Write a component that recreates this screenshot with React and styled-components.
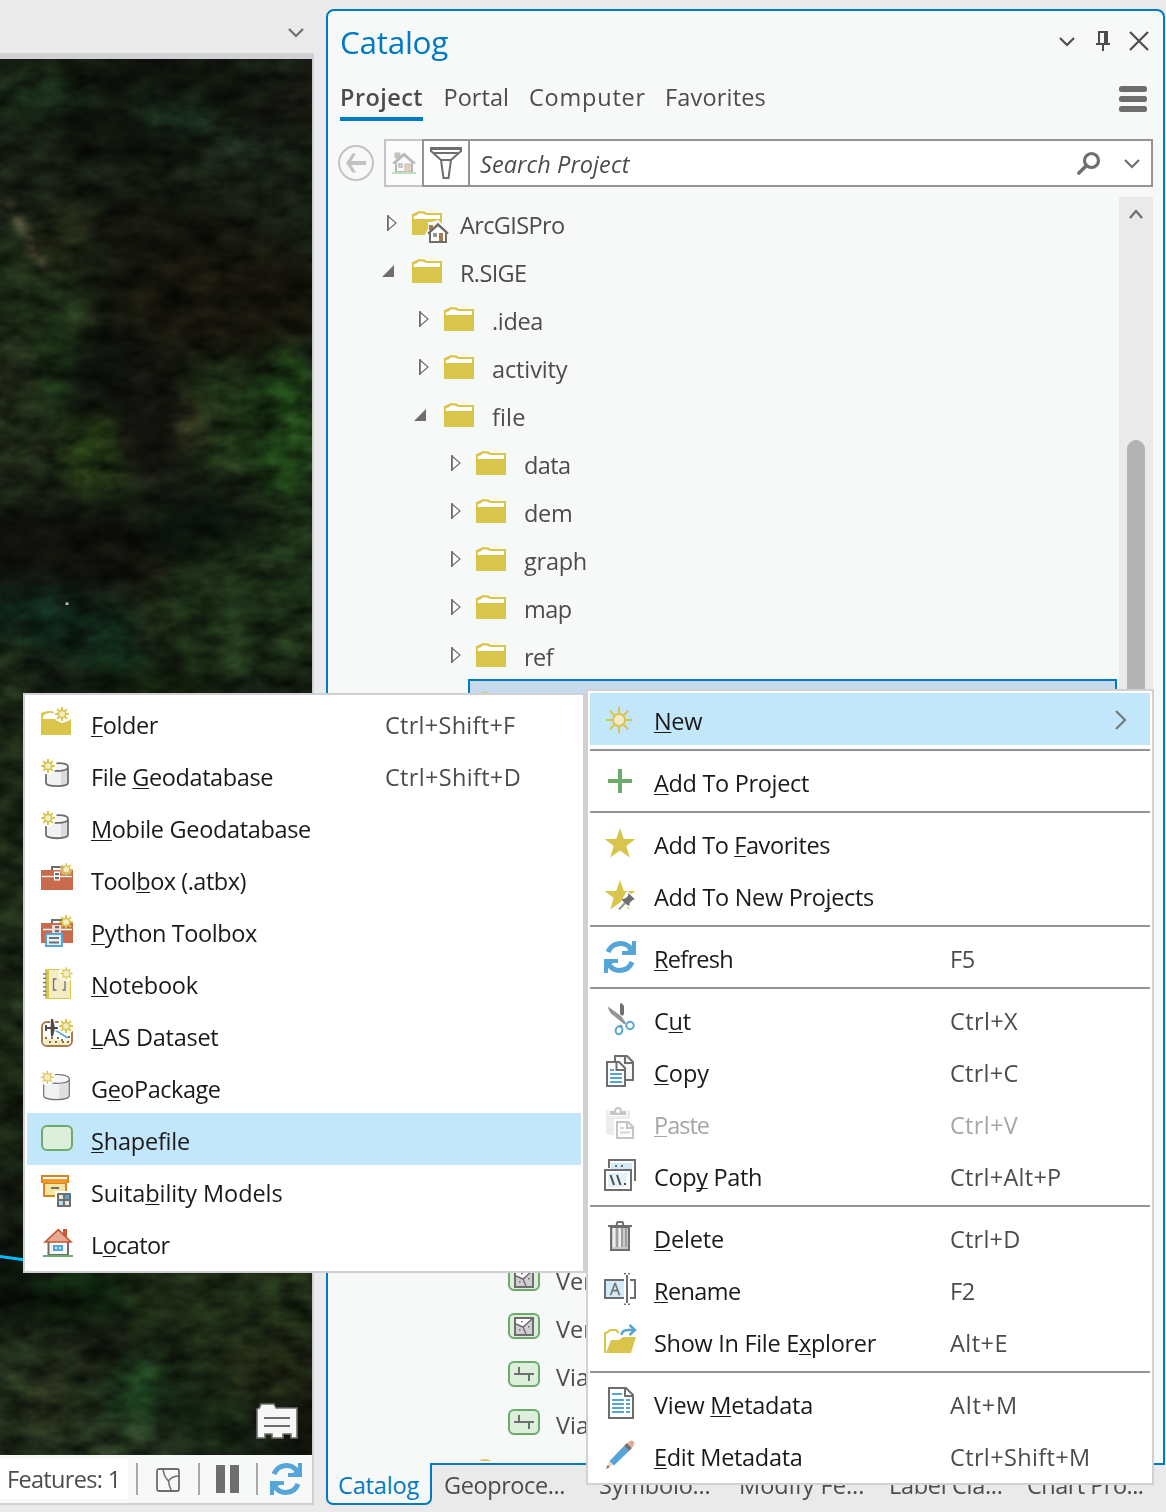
import React, { useLayoutEffect, useRef } from "react";
import styled, { createGlobalStyle } from "styled-components";

const C = {
  blue: "#007ac2",
  ink: "#4c4c4c",
  dark: "#1a1a1a",
  grey: "#6e6e6e",
  line: "#949494",
  frame: "#d0d0d5",
  chrome: "#eaeaea",
  pane: "#f7f9f9",
  gold: "#d9c54b",
  cream: "#f3edc5",
  sky: "#56a5d8",
  green: "#6bab6c",
  mint: "#ddeedb",
  red: "#c86a4b",
};

const Global = createGlobalStyle`
  * { box-sizing: border-box; }
  body { margin: 0; background: ${C.chrome}; font-family: "Open Sans", "Noto Sans", sans-serif; color: ${C.ink}; }
  svg { display: block; overflow: visible; flex: none; }
`;

/* ---------- text ---------- */
const TextSpan = styled.span`
  display: inline-block;
  white-space: pre;
  font-size: ${(p) => p.$size || 23.5}px;
  font-weight: ${(p) => p.$weight || 400};
  font-style: ${(p) => (p.$italic ? "italic" : "normal")};
  color: ${(p) => p.$color || "inherit"};
`;
const Mnemonic = styled.span`
  text-decoration: underline;
  text-decoration-thickness: 1px;
  text-underline-offset: 2px;
  text-decoration-skip-ink: none;
`;

/* Tracks the label so that its run is `width` pixels long; "&" marks the access key. */
function Label({ children, width, size, weight, italic, color }) {
  const ref = useRef(null);
  const at = children.indexOf("&");
  const plain = children.replace("&", "");
  useLayoutEffect(() => {
    const el = ref.current;
    if (!width) return;
    el.style.letterSpacing = "0px";
    const natural = el.getBoundingClientRect().width;
    el.style.letterSpacing = (width - natural) / plain.length + "px";
  }, [width, plain]);
  return (
    <TextSpan ref={ref} $size={size} $weight={weight} $italic={italic} $color={color}>
      {at < 0 ? plain : (
        <>
          {plain.slice(0, at)}
          <Mnemonic>{plain[at]}</Mnemonic>
          {plain.slice(at + 1)}
        </>
      )}
    </TextSpan>
  );
}

/* ---------- icons ---------- */
const Svg = ({ w = 32, h = 32, children }) => (
  <svg width={w} height={h} viewBox={`0 0 ${w} ${h}`} fill="none">{children}</svg>
);

const Sun = ({ x, y, r = 7, core = 3.7, sw = 1.6, halo }) => (
  <g>
    {halo && <circle cx={x} cy={y} r={r + 1.5} fill={halo} />}
    {[0, 45, 90, 135, 180, 225, 270, 315].map((a) => (
      <path key={a} d={`M${x} ${y - core}V${y - r}`} stroke={C.gold} strokeWidth={sw} transform={`rotate(${a} ${x} ${y})`} />
    ))}
    <circle cx={x} cy={y} r={core} fill={C.cream} stroke={C.gold} strokeWidth={sw * 0.9} />
  </g>
);

const FolderShape = () => (
  <>
    <path d="M0 3L3 2Q5 0 9 0Q13 0 15 2H30V24H0Z" fill={C.gold} />
    <path d="M2 5Q5 4.6 6 2.9Q9 1.8 12 3L14 4H28V8H2Z" fill="#fff" />
  </>
);
const FolderIcon = () => <Svg w={30} h={24}><FolderShape /></Svg>;
const HomeFolderIcon = () => (
  <Svg w={30} h={24}>
    <FolderShape />
    <path d="M13 23L16 18V11H20L26 9L37 20V34H15Z" fill={C.pane} />
    <path d="M17 14H21V19H17Z" fill="#ae7a48" />
    <path d="M18 21L26 14L34 21V31H18Z" fill="#fff" stroke={C.grey} strokeWidth="2" />
    <path d="M16 22.5L26 13.2L36 22.5" stroke={C.grey} strokeWidth="2" />
    <path d="M21 22H25V26H21Z" fill="#949494" />
    <path d="M27 22H31V30H27Z" fill="#ae7a48" />
  </Svg>
);
const PolygonLayerIcon = () => (
  <Svg w={32} h={26}>
    <rect x="1" y="1" width="30" height="24" rx="5" fill={C.mint} stroke={C.green} strokeWidth="2" />
    <rect x="7" y="5" width="18" height="17" fill="#cfcfcf" stroke={C.grey} strokeWidth="2" />
    <path d="M8 6H24L15 14L8 11Z" fill="#fff" />
    <path d="M8 11L15 14L24 6M15 14L18 21" stroke={C.grey} strokeWidth="1.5" />
    <path d="M13 8h1.6v1.6H13zM11 16h1.6v1.6H11zM20 13h1.6v1.6H20z" fill={C.grey} />
  </Svg>
);
const LineLayerIcon = () => (
  <Svg w={32} h={26}>
    <rect x="1" y="1" width="30" height="24" rx="5" fill={C.mint} stroke={C.green} strokeWidth="2" />
    <path d="M6 13H26M11 6V13M21 13V20" stroke={C.grey} strokeWidth="2" />
  </Svg>
);

const NewFolderIcon = () => (
  <Svg>
    <path d="M0 6L3 5Q5 4 9 4Q12 4 13 5H30V28H0Z" fill={C.gold} />
    <path d="M2 9Q6 5 11 6L13 7L17 12H2Z" fill="#fff" />
    <path d="M13 3H31V11L27 14L21 16L15 13Z" fill="#fff" />
    <Sun x={21} y={7} halo="#fff" sw={1.9} />
  </Svg>
);
const GeodatabaseIcon = () => (
  <Svg>
    <path d="M5 8V24C5 28.5 27 28.5 27 24V8" fill="#f2f2f2" />
    <path d="M20 11.5L27 8V24Q26 26.5 20 27Z" fill="#dcdcdc" />
    <ellipse cx="16" cy="8" rx="11" ry="3.7" fill="#f7f7f7" />
    <path d="M5 15V24C5 28.3 27 28.3 27 24V8C27 3.5 16 4 15.5 4.6M27 8C27 12 16 12.5 12 11.4" stroke={C.grey} strokeWidth="1.8" />
    <Sun x={7} y={7} halo="#fff" sw={1.9} />
  </Svg>
);
const GeoPackageIcon = () => (
  <Svg>
    <path d="M2.7 8V24.5C2.7 30 28.3 30 28.3 24.5V8" fill="#f2f2f2" />
    <path d="M18 12L28 9V24.5Q26 28 18 28.6Z" fill="#dfdfdf" />
    <ellipse cx="15.5" cy="8" rx="12.8" ry="4.2" fill="#f7f7f7" />
    <path d="M2.7 13V24.5C2.7 30 28.3 30 28.3 24.5V8C28.3 3 14 3 12 4.3M28.3 8C28.3 12.5 15 13 9 11.6" stroke={C.grey} strokeWidth="1.2" />
    <Sun x={6.3} y={6.3} r={6.5} halo="#fff" sw={1.3} />
  </Svg>
);
const ToolboxIcon = () => (
  <Svg>
    <path d="M11 7V4H21V7" stroke={C.grey} strokeWidth="2" />
    <path d="M0 7H32V27H0Z" fill={C.red} />
    <path d="M1 13.5H31" stroke="#fff" strokeWidth="1.3" />
    <rect x="13" y="8.5" width="6" height="9" fill="#fff" />
    <path d="M14 10h4v2.3h-4zM14 14h4v2.3h-4z" fill={C.grey} />
    <path d="M19 2H31V9L28 12H22L19 9Z" fill="#fff" opacity=".35" />
    <Sun x={25.3} y={6.5} r={6.3} sw={1.4} core={3.4} />
  </Svg>
);
const PythonToolboxIcon = () => (
  <Svg>
    <path d="M11 8V5H21V8" stroke={C.grey} strokeWidth="2" />
    <path d="M0 8H32V28H0Z" fill={C.red} />
    <path d="M2 14.5H31" stroke="#fff" strokeWidth="1.5" />
    <path d="M11 10H20V18H11Z" fill="#f3dcd5" />
    <path d="M14 11h4v2.3h-4zM14 15h4v2.3h-4z" fill={C.grey} />
    <Sun x={25} y={7} sw={1.9} />
    <rect x="5" y="19" width="16" height="12" fill="#e4f1f9" stroke={C.sky} strokeWidth="2" />
    <path d="M8 23H18M8 27.5H18" stroke={C.grey} strokeWidth="2" />
  </Svg>
);
const NotebookIcon = () => (
  <Svg>
    <path d="M4.5 2.5H29.5V31.5H4.5Z" fill={C.cream} stroke={C.gold} />
    <path d="M4.5 2H8V32H4.5Z" fill={C.gold} />
    {[7, 11.3, 15.6, 19.9, 24.2, 28].map((y) => <path key={y} d={`M2 ${y}H5.4`} stroke={C.grey} strokeWidth="1.3" />)}
    <path d="M15.5 12H12.5V23H15.5M21.5 12H24V23H21.5" stroke={C.grey} strokeWidth="1.3" />
    <Sun x={25.3} y={6.5} r={6.3} halo="#fff" sw={1.3} />
  </Svg>
);
const LasIcon = () => (
  <Svg>
    <rect x="1" y="3" width="30" height="24" rx="5" fill="#fff" stroke="#ae7a48" strokeWidth="2" />
    <path d="M3 19Q11 20 18 21T29 21V23L26 26H6L3 23Z" fill={C.cream} />
    {[[4, 18], [10, 18], [16, 18], [20, 20], [8, 22], [14, 22], [21, 22], [26, 22], [27, 17]].map(([x, y]) => (
      <rect key={x + "-" + y} x={x} y={y} width="2" height="2" fill="#8f6a48" />
    ))}
    <path d="M14 11L27 19" stroke={C.sky} strokeWidth="1.6" />
    <path d="M3 9H18M5 6V12M11.5 0V17" stroke="#fff" strokeWidth="5" />
    <path d="M4 9H18M5 6V12" stroke={C.ink} strokeWidth="2" />
    <path d="M10 0H12L14 9L12 17.5H10L9.5 9Z" fill={C.ink} />
    <Sun x={25} y={7} halo="#fff" sw={1.9} />
  </Svg>
);
const ShapefileIcon = () => (
  <Svg><rect x="1" y="3" width="30" height="24" rx="5" fill={C.mint} stroke={C.green} strokeWidth="2" /></Svg>
);
const SuitabilityIcon = () => (
  <Svg>
    <path d="M3 8H25V21H3Z" fill="#f3e6a2" stroke="#d98322" strokeWidth="2" />
    <path d="M1 1H27V7H1Z" fill="#fff" stroke="#d98322" strokeWidth="2" />
    <path d="M2 4H26V8H2Z" fill="#f7982b" />
    <path d="M10 13H18" stroke={C.grey} strokeWidth="2" />
    <path d="M14 16H32V34H14Z" fill="#fff" />
    <rect x="17" y="19" width="12" height="12" fill={C.mint} stroke={C.grey} strokeWidth="2" />
    <path d="M23 19H29V25H23Z" fill={C.sky} />
    <path d="M17 25H23V31H17Z" fill="#b9dcf2" />
    <path d="M17 19H29V31H17ZM23 19V31M17 25H29" stroke={C.grey} strokeWidth="2" />
  </Svg>
);
const LocatorIcon = () => (
  <Svg>
    <path d="M7.5 14H27V28H7.5Z" fill="#f7f7f7" stroke={C.grey} strokeWidth="2" />
    <path d="M22 2H26V10H22Z" fill="#c95730" />
    <path d="M4 15L17.3 2.7L30 15Z" fill="#e6a994" stroke="#c95730" strokeWidth="1.6" />
    <path d="M2 29H32" stroke={C.green} strokeWidth="2" />
    <rect x="12" y="18" width="10" height="6" fill={C.sky} />
    <path d="M14 20h2v2h-2zM18 20h2v2h-2z" fill="#cfe8f7" />
  </Svg>
);

const NewIcon = () => <Svg><Sun x={15} y={17} r={13} core={6} sw={2} /></Svg>;
const PlusIcon = () => <Svg><path d="M16 4V28M4 16H28" stroke={C.green} strokeWidth="4" /></Svg>;
const STAR = "M16 1L19.8 12H31.6L22.3 19L25.7 30.5L16 23.5L6.3 30.5L9.7 19L0.4 12H12.2Z";
const StarIcon = () => <Svg><path d={STAR} fill={C.gold} /></Svg>;
const StarPinIcon = () => (
  <Svg>
    <path d={STAR} fill={C.gold} />
    <path d="M23 12L33 19L26 27L22 29L13 33L17 22Z" fill="#fff" />
    <path d="M24.5 14L31 20.5L28.5 21L25.5 24L25.5 27L21.5 25L17.5 20.5L18.5 20L21 19.5L24 17Z" fill={C.grey} />
    <path d="M21 24L15 30.5" stroke={C.line} strokeWidth="2" />
  </Svg>
);
const RefreshIcon = () => (
  <Svg>
    <path d="M4 11A13.2 13.2 0 0 1 27 8" stroke={C.sky} strokeWidth="5" />
    <path d="M32 0V14H18V10H23L28 5V0Z" fill={C.sky} />
    <path d="M28 21A13.2 13.2 0 0 1 5 24" stroke={C.sky} strokeWidth="5" />
    <path d="M0 32V18H14V22H9L4 27V32Z" fill={C.sky} />
  </Svg>
);
const CutIcon = () => (
  <Svg>
    <path d="M16 1L17.5 0L20 3V11L18.5 13L16 11Z" fill={C.grey} />
    <path d="M4 3.5L17 13L22 20L20.5 21.5L7 10.5Q4 7 4 3.5Z" fill="#949494" />
    <path d="M16.5 22L18 24" stroke={C.grey} strokeWidth="1.5" />
    <circle cx="26" cy="22.5" r="3.7" stroke={C.sky} strokeWidth="2" />
    <ellipse cx="15" cy="27.3" rx="3.3" ry="4" stroke={C.sky} strokeWidth="2" transform="rotate(15 15 27.3)" />
  </Svg>
);
const CopyIcon = () => (
  <Svg>
    <path d="M11 1H23L29 7V25H11Z" fill="#f7f7f7" stroke={C.grey} strokeWidth="2" />
    <path d="M21 1V8H29" stroke={C.grey} strokeWidth="2" />
    <path d="M3 7H15L21 13V31H3Z" fill="#fff" stroke={C.grey} strokeWidth="2" />
    <path d="M12.5 7V15H21" stroke={C.grey} strokeWidth="2" />
    <path d="M6 15H10M6 19H18M6 23H18M6 27H18" stroke={C.sky} strokeWidth="2" />
  </Svg>
);
const PasteIcon = () => (
  <Svg>
    <rect x="2" y="3" width="24" height="25" rx="2" fill="#ededed" />
    <path d="M5 3H23V9H5Z" fill="#fff" />
    <path d="M6 4H22V8H6Z" fill="#c5c5c5" />
    <circle cx="14" cy="4" r="3" fill="#fff" stroke="#c5c5c5" strokeWidth="1.8" />
    <path d="M10 12H32V34H10Z" fill="#fff" />
    <path d="M13 15H24L29 20V31H13Z" fill="#fdfdfd" stroke="#c5c5c5" strokeWidth="2" />
    <path d="M23 15V21H29" stroke="#c5c5c5" strokeWidth="2" />
    <path d="M16 21H20M16 25.5H26" stroke="#d6d6d6" strokeWidth="2" />
  </Svg>
);
const CopyPathIcon = () => (
  <Svg>
    <path d="M5 9V1H31V22" stroke={C.grey} strokeWidth="2" />
    <path d="M7 4H28V10H7Z" fill="#d3eaf8" />
    <path d="M11 6h2v2h-2zM17 6h2v2h-2z" fill={C.grey} />
    <path d="M1 11H27V31H1Z" fill="#fff" stroke={C.grey} strokeWidth="2" />
    <path d="M4 28V14H24L20 28Z" fill="#e4f2fa" />
    <path d="M6.5 16L10 26M13 16L16.5 26" stroke={C.ink} strokeWidth="2" />
    <path d="M20 24h2v2h-2z" fill={C.ink} />
  </Svg>
);
const DeleteIcon = () => (
  <Svg>
    <path d="M12.8 4V2.5Q13 1 14.5 1H17.5Q19 1 19.2 2.5V4" stroke={C.grey} strokeWidth="2" />
    <path d="M7 6H25V29H7Z" fill="#c9c9c9" stroke={C.grey} strokeWidth="2" />
    <path d="M10 7V26M16 7V26" stroke="#eee" strokeWidth="2.2" />
    <path d="M13 7V26M18 7V26M22 7V26" stroke="#949494" strokeWidth="1.6" />
    <path d="M4 5H28" stroke={C.grey} strokeWidth="2" />
  </Svg>
);
const RenameIcon = () => (
  <Svg>
    <path d="M20 7H1V25H20" fill="#d3eaf8" stroke={C.grey} strokeWidth="2" />
    <text x="11" y="22" textAnchor="middle" fontSize="16" fill={C.grey} stroke={C.grey} strokeWidth=".3" fontFamily="Open Sans">A</text>
    <path d="M26 7H31V25H26" stroke={C.grey} strokeWidth="2" />
    <path d="M23 2V30" stroke={C.grey} strokeWidth="2" />
    <path d="M20 0h2v1.6h-2zM24 0h2v1.6h-2zM20 30.4h2v1.6h-2zM24 30.4h2v1.6h-2z" fill={C.grey} />
  </Svg>
);
const ExplorerIcon = () => (
  <Svg>
    <path d="M1 27V8Q5 7 6 5H12L15 8" stroke={C.gold} strokeWidth="2" />
    <path d="M2 28L7 15H15L19 12H32L27 28H0V24Z" fill={C.gold} />
    <path d="M17.5 10Q18 5 24 5H30" stroke={C.sky} strokeWidth="2.4" />
    <path d="M25.5 0L31 5L25.5 10" stroke={C.sky} strokeWidth="2.4" />
  </Svg>
);
const ViewMetadataIcon = () => (
  <Svg>
    <path d="M5 1H22L29 8V31H5Z" fill="#fff" stroke={C.grey} strokeWidth="2" />
    <path d="M21 1V9H29" stroke={C.grey} strokeWidth="2" />
    <path d="M8 7H18M8 13H20M8 17H20M8 21H20M8 25H20M22 13H26M22 17H26M22 21H26M22 25H26" stroke={C.sky} strokeWidth="1.8" />
  </Svg>
);
const EditMetadataIcon = () => (
  <Svg>
    <path d="M5.5 22L9.5 26L4.5 28.5L3.2 27.2Z" fill="#f3dcc0" />
    <path d="M3.7 26L5.8 28L2 30Z" fill={C.grey} />
    <path d="M5.5 22L20 7L25 12L10 26.5Z" fill={C.sky} />
    <path d="M20 7L23 4L28 9L25 12Z" fill={C.grey} />
    <path d="M23.5 4L26 2Q28 1 29.5 2.5T30 6L28 9Z" fill="#e6a994" />
  </Svg>
);

const Chevron = ({ w = 16, h = 9, dir = "down", color = C.ink, sw = 2.2 }) => {
  const d = {
    down: `M1 1L${w / 2} ${h - 1}L${w - 1} 1`,
    up: `M1 ${h - 1}L${w / 2} 1L${w - 1} ${h - 1}`,
    right: `M1 1L${w - 1} ${h / 2}L1 ${h - 1}`,
  }[dir];
  return <Svg w={w} h={h}><path d={d} stroke={color} strokeWidth={sw} /></Svg>;
};
const PinIcon = () => (
  <Svg w={14} h={20}>
    <path d="M3 13V1H11V13" stroke={C.ink} strokeWidth="2" />
    <path d="M8 1H12V13H8Z" fill={C.ink} />
    <path d="M0 13H14M7 14V20" stroke={C.ink} strokeWidth="2" />
  </Svg>
);
const CloseIcon = () => <Svg w={20} h={20}><path d="M1 1L19 19M19 1L1 19" stroke={C.ink} strokeWidth="2.2" /></Svg>;
const BackIcon = () => (
  <Svg w={36} h={36}>
    <circle cx="18" cy="18" r="17" stroke="#c2c2c2" strokeWidth="2" />
    <path d="M28 18H11" stroke="#c2c2c2" strokeWidth="4" />
    <path d="M18 8.5H14.5L8 18L14.5 27.5H18L12 18Z" fill="#c2c2c2" />
  </Svg>
);
const HomeIcon = () => (
  <Svg w={24} h={22}>
    <path d="M3 1H8V6H3Z" fill="#cfc4b8" stroke="#bbb" />
    <path d="M4 10V20H20V10L12 3Z" fill="#fbfbfb" stroke="#b9b9b9" strokeWidth="2" />
    <path d="M1 11.5L12 2L23 11.5" stroke="#b9b9b9" strokeWidth="2.2" />
    <path d="M7 12h3v3H7z" stroke="#b9b9b9" strokeWidth="1.5" />
    <path d="M13 12H18V20H13Z" fill="#e3d3c2" stroke="#c5b9ac" />
    <path d="M0 21H24" stroke="#bfe0bf" strokeWidth="2" />
  </Svg>
);
const FilterIcon = () => (
  <Svg w={32} h={32}>
    <path d="M1 1H31V4L21 13L18.5 31H13.5L11 13L1 4Z" fill="#fff" stroke={C.grey} strokeWidth="2" />
    <path d="M1 2H31M4 6H28M11 13H21" stroke={C.grey} strokeWidth="2" />
  </Svg>
);
const SearchIcon = () => (
  <Svg w={24} h={24}>
    <circle cx="15.5" cy="8.5" r="7" stroke={C.grey} strokeWidth="3.2" />
    <path d="M10.5 13.5L2.9 21.1" stroke={C.grey} strokeWidth="3.6" strokeLinecap="round" />
  </Svg>
);
const ClosedArrow = () => (
  <Svg w={10} h={16}><path d="M1 1V15L9 8Z" fill="#fff" stroke={C.grey} strokeWidth="1.2" /><path d="M.8 0V16" stroke={C.grey} strokeWidth="1.6" /></Svg>
);
const OpenArrow = () => <Svg w={12} h={12}><path d="M12 0V12H0Z" fill={C.grey} /></Svg>;
const MapStatusIcon = () => (
  <Svg w={24} h={24}>
    <rect x="1" y="2" width="22" height="22" rx="2" stroke={C.grey} strokeWidth="1.8" />
    <path d="M7 2Q8 10 12.5 14Q16 9 23 9M12.5 14Q13 19 15.5 24" stroke={C.grey} strokeWidth="1.6" />
  </Svg>
);
const TrayIcon = () => (
  <Svg w={42} h={36}>
    <path d="M1 6L3.5 5L5 1H18L20 5H41V35H35V31H27V35H16V31H9V35H1Z" fill="#f7f7f7" stroke={C.grey} strokeWidth="1.6" />
    <path d="M8 15H34M8 23H34" stroke={C.grey} strokeWidth="2" />
  </Svg>
);

/* ---------- shell ---------- */
const Shell = styled.div`
  position: relative;
  display: flex;
  gap: 12px;
  width: 1166px;
  height: 1512px;
  overflow: hidden;
  background: ${C.chrome};
`;
const MapColumn = styled.section`
  width: 314px;
  flex: none;
  display: flex;
  flex-direction: column;
`;
const MapTabs = styled.div`
  height: 53px;
  padding: 12px 10px 0 0;
  display: flex;
  justify-content: flex-end;
  align-items: center;
`;
const MapFrame = styled.div`
  height: 1452px;
  border: solid ${C.frame};
  border-width: 6px 2px 2px 0;
  display: flex;
  flex-direction: column;
`;
const MapView = styled.div`
  height: 1396px;
  position: relative;
  overflow: hidden;
`;
const Tray = styled.div`
  position: absolute;
  right: 14px;
  bottom: 16px;
`;
const StatusBar = styled.div`
  flex: 1;
  background: ${C.pane};
  display: flex;
  align-items: center;
`;
const FeatureCount = styled.div`
  width: 128px;
  height: 40px;
  padding-left: 7px;
  background: #fff;
  display: flex;
  align-items: center;
`;
const StatusCell = styled.div`
  width: ${(p) => p.$w}px;
  height: 32px;
  margin-left: ${(p) => p.$gap || 0}px;
  border-left: 2px solid #a9a9a9;
  padding-right: ${(p) => p.$trim || 0}px;
  padding-left: ${(p) => p.$lead || 0}px;
  display: flex;
  align-items: center;
  justify-content: center;
`;
const Pause = styled.div`
  width: 23px;
  height: 28px;
  border: solid ${C.grey};
  border-width: 0 9px;
`;

/* Ground cover patches: centre x, centre y, radius x, radius y, colour */
const CELLS = [
  [20, 90, 90, 50, "#1a2515"], [150, 110, 120, 60, "#11150d"], [45, 98, 60, 20, "#1a2f1c"], [290, 100, 50, 30, "#171a12"],
  [310, 95, 12, 12, "#38352c"], [160, 105, 50, 14, "#1a2c1b"], [185, 122, 44, 12, "#1d3824"], [240, 147, 40, 12, "#2b3f2e"],
  [160, 290, 150, 110, "#16190f"], [40, 300, 60, 90, "#1f2f18"], [60, 240, 40, 40, "#252b18"], [105, 385, 50, 50, "#10140f"],
  [230, 300, 120, 60, "#19180e"], [20, 420, 50, 90, "#242f1b"], [55, 370, 16, 70, "#1e3818"], [98, 455, 40, 46, "#283f16"],
  [150, 430, 40, 60, "#151510"], [215, 420, 36, 70, "#223719"], [285, 430, 44, 90, "#234c1a"], [260, 440, 10, 60, "#183012"],
  [190, 425, 16, 36, "#34371f"], [60, 550, 120, 46, "#11130d"], [200, 530, 60, 34, "#0c160d"], [30, 620, 90, 36, "#10291c"],
  [120, 640, 70, 36, "#122e1c"], [155, 610, 18, 60, "#1f1f11"], [245, 615, 100, 80, "#20341a"], [300, 540, 40, 60, "#1f3419"],
  [150, 690, 80, 24, "#15230f"], [20, 720, 60, 60, "#101d11"], [10, 900, 40, 300, "#1f2d18"], [10, 1290, 60, 50, "#0d160c"],
  [90, 1290, 60, 40, "#10260f"], [230, 1290, 120, 80, "#213018"], [90, 1350, 60, 30, "#181c12"], [20, 1400, 80, 80, "#27351f"],
  [50, 1420, 10, 70, "#2d2e1a"], [145, 1400, 46, 50, "#1f4220"], [210, 1410, 60, 50, "#192a16"], [270, 1370, 60, 40, "#252d17"],
  [110, 1448, 90, 26, "#2b3b24"], [305, 1430, 26, 60, "#151a0f"],
];
const Imagery = () => (
  <svg width="312" height="1396" viewBox="0 59 312 1396">
    <defs>
      <filter id="soft" x="-30%" y="-30%" width="160%" height="160%" colorInterpolationFilters="sRGB"><feGaussianBlur stdDeviation="12" /></filter>
      <filter id="smudge" x="-30%" y="-30%" width="160%" height="160%" colorInterpolationFilters="sRGB"><feGaussianBlur stdDeviation="3.5" /></filter>
      <filter id="grain" x="0" y="0" width="100%" height="100%" colorInterpolationFilters="sRGB">
        <feTurbulence type="fractalNoise" baseFrequency="0.032 0.055" numOctaves="3" seed="11" />
        <feColorMatrix values=".65 .3 0 0 -.06  .65 .25 .05 0 -.06  .65 .3 0 0 -.06  0 0 0 0 1" />
      </filter>
    </defs>
    <rect y="59" width="312" height="1396" fill="#1a2216" />
    <g filter="url(#soft)">
      {CELLS.map(([x, y, rx, ry, f], i) => <ellipse key={i} cx={x} cy={y} rx={rx / 1.1} ry={ry / 1.1} fill={f} />)}
    </g>
    <g filter="url(#smudge)" fill="none" strokeLinecap="round">
      <path d="M2 208L10 204" strokeWidth="10" stroke="#5c5c44" />
      <path d="M17 220L25 230" strokeWidth="10" stroke="#5b5842" />
      <path d="M28 240L33 255L46 268" strokeWidth="7" stroke="#4e4b37" />
    </g>
    <rect y="59" width="312" height="1396" filter="url(#grain)" style={{ mixBlendMode: "overlay" }} />
    <rect x="65.5" y="602.5" width="3" height="2.5" fill="#b9c0b6" />
    <path d="M0 1256.5L26 1260" stroke="#00bfff" strokeWidth="3" />
  </svg>
);

/* ---------- catalog pane ---------- */
const Pane = styled.section`
  width: 839px;
  flex: none;
  margin-top: 9px;
  display: flex;
  flex-direction: column;
`;
const PaneBody = styled.div`
  height: 1456px;
  border: 2px solid ${C.blue};
  border-radius: 8px 8px 0 0;
  background: ${C.pane};
  display: flex;
  flex-direction: column;
  overflow: hidden;
`;
const TitleBar = styled.header`
  height: 64px;
  padding: 0 14px 0 12px;
  display: flex;
  align-items: center;
  justify-content: space-between;
`;
const Title = styled.h1`
  margin: 0 0 2px;
  line-height: 44px;
  font-weight: 400;
`;
const TitleButtons = styled.div`
  display: grid;
  grid-template-columns: 37px 33px 20px;
  align-items: center;
  padding-bottom: 4px;
`;
const SearchTools = styled.div`
  display: flex;
  align-items: center;
  gap: 24px;
`;
const Tabs = styled.nav`
  height: 46px;
  padding: 0 16px 0 12px;
  display: flex;
  align-items: stretch;
`;
const Tab = styled.div`
  width: ${(p) => p.$w}px;
  margin-right: ${(p) => p.$gap}px;
  line-height: 44px;
  height: 46px;
  border-bottom: 4px solid ${(p) => (p.$active ? C.blue : "transparent")};
`;
const Burger = styled.button`
  width: 28px;
  height: 26px;
  margin: 11px 0 0 auto;
  padding: 0;
  border: 0;
  background: none;
  display: flex;
  flex-direction: column;
  gap: 4px;
`;
const BurgerBar = styled.span`
  height: 6px;
  border-radius: 2.5px;
  background: ${C.grey};
`;
const SearchRow = styled.div`
  height: 48px;
  margin: 18px 10px 0;
  display: flex;
  align-items: center;
`;
const SquareButton = styled.div`
  width: ${(p) => p.$w}px;
  height: 48px;
  border: 2px solid ${(p) => (p.$muted ? "#c5c5c5" : C.line)};
  border-right: 0;
  margin-left: ${(p) => (p.$muted ? 10 : 0)}px;
  background: ${(p) => (p.$muted ? "#fbfbfb" : "#fff")};
  display: flex;
  align-items: center;
  justify-content: center;
`;
const SearchBox = styled.div`
  flex: 1;
  height: 48px;
  padding: 1px 11px 0 10px;
  border: 2px solid ${C.line};
  background: #fff;
  display: flex;
  align-items: center;
  justify-content: space-between;
`;
const TreeArea = styled.div`
  flex: 1;
  min-height: 0;
  margin-top: 10px;
  padding-right: 10px;
  display: flex;
`;
const Tree = styled.div`
  flex: 1;
  margin-bottom: 2px;
  padding-top: 4px;
  overflow: hidden;
`;
const TreeRow = styled.div`
  height: 48px;
  padding-left: ${(p) => 54 + p.$depth * 32}px;
  display: flex;
`;
const Twisty = styled.div`
  width: 30px;
  padding: ${(p) => (p.$open ? "16px 0 0 0" : "14px 0 0 5px")};
`;
const RowIcon = styled.div`
  width: 48px;
  padding-top: ${(p) => (p.$layer ? 8 : 10)}px;
`;
const RowText = styled.div`
  line-height: 48px;
`;
const SelectedRow = styled.div`
  height: 50px;
  margin: -2px 2px 0 140px;
  padding: 11px 0 0 6px;
  border: 2px solid ${C.blue};
  background: #c6daee;
`;
const HiddenRows = styled.div`
  height: ${(p) => p.$count * 48}px;
`;
const ScrollBar = styled.div`
  width: 34px;
  background: ${C.chrome};
  display: flex;
  flex-direction: column;
  align-items: center;
  padding-top: 13px;
`;
const Thumb = styled.div`
  width: 18px;
  height: 420px;
  margin-top: 221px;
  border-radius: 9px;
  background: #b3b3b3;
`;
const BottomTabs = styled.nav`
  height: 42px;
  margin-top: -2px;
  display: flex;
`;
const BottomTab = styled.div`
  width: ${(p) => p.$w}px;
  line-height: 44px;
  padding-left: ${(p) => p.$pad || 0}px;
`;
const ActiveBottomTab = styled.div`
  width: 106px;
  padding-left: 10px;
  line-height: 44px;
  border: solid ${C.blue};
  border-width: 0 2px 2px;
  border-radius: 0 0 7px 7px;
  background: ${C.pane};
  position: relative;
`;

/* ---------- menus ---------- */
const Menu = styled.div`
  position: absolute;
  left: ${(p) => p.$x}px;
  top: ${(p) => p.$y}px;
  width: ${(p) => p.$w}px;
  padding: 2px;
  border: 2px solid ${C.frame};
  background: #fff;
  box-shadow: ${(p) => (p.$edge ? `1px 0 0 ${C.frame}` : "none")};
`;
const Item = styled.div`
  height: 52px;
  display: grid;
  grid-template-columns: ${(p) => p.$cols};
  padding: 10px 0 0 14px;
  background: ${(p) => (p.$hot ? "#c2e6fa" : "transparent")};
  color: ${(p) => (p.$disabled ? "#a6a6a6" : C.dark)};
`;
const ItemText = styled.div`
  line-height: 36px;
  color: ${(p) => (p.$key && !p.$disabled ? C.ink : "inherit")};
`;
const SubmenuMark = styled.div`
  padding: 7px 0 0 165px;
`;
const Rule = styled.hr`
  height: 2px;
  margin: 4px 0;
  border: 0;
  background: ${C.line};
`;

const MAIN = [
  { icon: NewIcon, text: "&New", w: 48, hot: true, sub: true }, null,
  { icon: PlusIcon, text: "&Add To Project", w: 155 }, null,
  { icon: StarIcon, text: "Add To &Favorites", w: 176 },
  { icon: StarPinIcon, text: "Add To New Pro&jects", w: 220 }, null,
  { icon: RefreshIcon, text: "&Refresh", w: 79, key: "F5", kw: 25 }, null,
  { icon: CutIcon, text: "C&ut", w: 37, key: "Ctrl+X", kw: 68 },
  { icon: CopyIcon, text: "&Copy", w: 55, key: "Ctrl+C", kw: 68.5 },
  { icon: PasteIcon, text: "&Paste", w: 55, key: "Ctrl+V", kw: 68, disabled: true },
  { icon: CopyPathIcon, text: "Cop&y Path", w: 108, key: "Ctrl+Alt+P", kw: 111.5 }, null,
  { icon: DeleteIcon, text: "&Delete", w: 70, key: "Ctrl+D", kw: 70.5 },
  { icon: RenameIcon, text: "&Rename", w: 86.5, key: "F2", kw: 25 },
  { icon: ExplorerIcon, text: "Show In File E&xplorer", w: 222, key: "Alt+E", kw: 58 }, null,
  { icon: ViewMetadataIcon, text: "View &Metadata", w: 159, key: "Alt+M", kw: 68 },
  { icon: EditMetadataIcon, text: "&Edit Metadata", w: 148.5, key: "Ctrl+Shift+M", kw: 140.5 },
];
const SUB = [
  { icon: NewFolderIcon, text: "&Folder", w: 67, key: "Ctrl+Shift+F", kw: 130.5 },
  { icon: GeodatabaseIcon, text: "File &Geodatabase", w: 182, key: "Ctrl+Shift+D", kw: 136 },
  { icon: GeodatabaseIcon, text: "&Mobile Geodatabase", w: 220 },
  { icon: ToolboxIcon, text: "Tool&box (.atbx)", w: 155 },
  { icon: PythonToolboxIcon, text: "&Python Toolbox", w: 166 },
  { icon: NotebookIcon, text: "&Notebook", w: 107 },
  { icon: LasIcon, text: "&LAS Dataset", w: 127.5 },
  { icon: GeoPackageIcon, text: "G&eoPackage", w: 129.5 },
  { icon: ShapefileIcon, text: "&Shapefile", w: 99, hot: true },
  { icon: SuitabilityIcon, text: "Suita&bility Models", w: 191.5 },
  { icon: LocatorIcon, text: "L&ocator", w: 78.5 },
];

const MenuItems = ({ items, cols }) =>
  items.map((it, i) => {
    if (!it) return <Rule key={i} />;
    const Icon = it.icon;
    return (
      <Item key={i} $cols={cols} $hot={it.hot} $disabled={it.disabled}>
        <Icon />
        <ItemText><Label width={it.w}>{it.text}</Label></ItemText>
        {it.key && <ItemText $key $disabled={it.disabled}><Label width={it.kw}>{it.key}</Label></ItemText>}
        {it.sub && <SubmenuMark><Chevron w={11} h={20} dir="right" color="#7a7a7a" /></SubmenuMark>}
      </Item>
    );
  });

const TREE = [
  { d: 0, text: "ArcGISPro", w: 104.5, home: true },
  { d: 0, text: "R.SIGE", w: 66.5, open: true },
  { d: 1, text: ".idea", w: 51 },
  { d: 1, text: "activity", w: 75.5 },
  { d: 1, text: "file", w: 33.5, open: true },
  { d: 2, text: "data", w: 46.5 },
  { d: 2, text: "dem", w: 48.5 },
  { d: 2, text: "graph", w: 63 },
  { d: 2, text: "map", w: 47.5 },
  { d: 2, text: "ref", w: 29 },
];
const LAYERS = [
  [PolygonLayerIcon, "Ver"], [PolygonLayerIcon, "Ver"], [LineLayerIcon, "Via"], [LineLayerIcon, "Via"],
];

export default function App() {
  return (
    <Shell>
      <Global />
      <MapColumn>
        <MapTabs><Chevron color={C.grey} /></MapTabs>
        <MapFrame>
          <MapView>
            <Imagery />
            <Tray><TrayIcon /></Tray>
          </MapView>
          <StatusBar>
            <FeatureCount><Label width={113.5}>Features: 1</Label></FeatureCount>
            <StatusCell $w={62} $gap={8}><MapStatusIcon /></StatusCell>
            <StatusCell $w={58} $trim={2}><Pause /></StatusCell>
            <StatusCell $w={56} $lead={2}><RefreshIcon /></StatusCell>
          </StatusBar>
        </MapFrame>
      </MapColumn>

      <Pane>
        <PaneBody>
          <TitleBar>
            <Title><Label width={108} size={31.5} color={C.blue}>Catalog</Label></Title>
            <TitleButtons>
              <Chevron />
              <PinIcon />
              <CloseIcon />
            </TitleButtons>
          </TitleBar>
          <Tabs>
            <Tab $w={83} $gap={20.5} $active><Label width={83} weight={600}>Project</Label></Tab>
            <Tab $w={65} $gap={20.5}><Label width={65.5}>Portal</Label></Tab>
            <Tab $w={116} $gap={20}><Label width={117}>Computer</Label></Tab>
            <Tab $w={100} $gap={0}><Label width={101}>Favorites</Label></Tab>
            <Burger><BurgerBar /><BurgerBar /><BurgerBar /></Burger>
          </Tabs>
          <SearchRow>
            <BackIcon />
            <SquareButton $w={38} $muted><HomeIcon /></SquareButton>
            <SquareButton $w={46}><FilterIcon /></SquareButton>
            <SearchBox>
              <Label width={149.5} italic>Search Project</Label>
              <SearchTools><SearchIcon /><Chevron color={C.grey} /></SearchTools>
            </SearchBox>
          </SearchRow>
          <TreeArea>
            <Tree>
              {TREE.map((r) => (
                <TreeRow key={r.text} $depth={r.d}>
                  <Twisty $open={r.open}>{r.open ? <OpenArrow /> : <ClosedArrow />}</Twisty>
                  <RowIcon>{r.home ? <HomeFolderIcon /> : <FolderIcon />}</RowIcon>
                  <RowText><Label width={r.w}>{r.text}</Label></RowText>
                </TreeRow>
              ))}
              <SelectedRow><FolderIcon /></SelectedRow>
              <HiddenRows $count={11} />
              {LAYERS.map(([Icon, text], i) => (
                <TreeRow key={i} $depth={3}>
                  <Twisty $open />
                  <RowIcon $layer><Icon /></RowIcon>
                  <RowText><Label>{text}</Label></RowText>
                </TreeRow>
              ))}
              <TreeRow $depth={2}>
                <Twisty $open />
                <RowIcon><FolderIcon /></RowIcon>
              </TreeRow>
            </Tree>
            <ScrollBar>
              <Chevron dir="up" w={14} h={9} color={C.grey} />
              <Thumb />
            </ScrollBar>
          </TreeArea>
        </PaneBody>
        <BottomTabs>
          <ActiveBottomTab><Label width={81} color={C.blue}>Catalog</Label></ActiveBottomTab>
          <BottomTab $w={167} $pad={12}><Label width={121}>Geoproce...</Label></BottomTab>
          <BottomTab $w={140}><Label width={111.5}>Symbolo...</Label></BottomTab>
          <BottomTab $w={150}><Label width={125.5}>Modify Fe...</Label></BottomTab>
          <BottomTab $w={138}><Label width={113.5}>Label Cla...</Label></BottomTab>
          <BottomTab $w={120}><Label width={116.5}>Chart Pro...</Label></BottomTab>
        </BottomTabs>
      </Pane>

      <Menu $x={23} $y={693} $w={562} $edge><MenuItems items={SUB} cols="50px 294px 1fr" /></Menu>
      <Menu $x={586} $y={689} $w={568}><MenuItems items={MAIN} cols="50px 296px 1fr" /></Menu>
    </Shell>
  );
}
